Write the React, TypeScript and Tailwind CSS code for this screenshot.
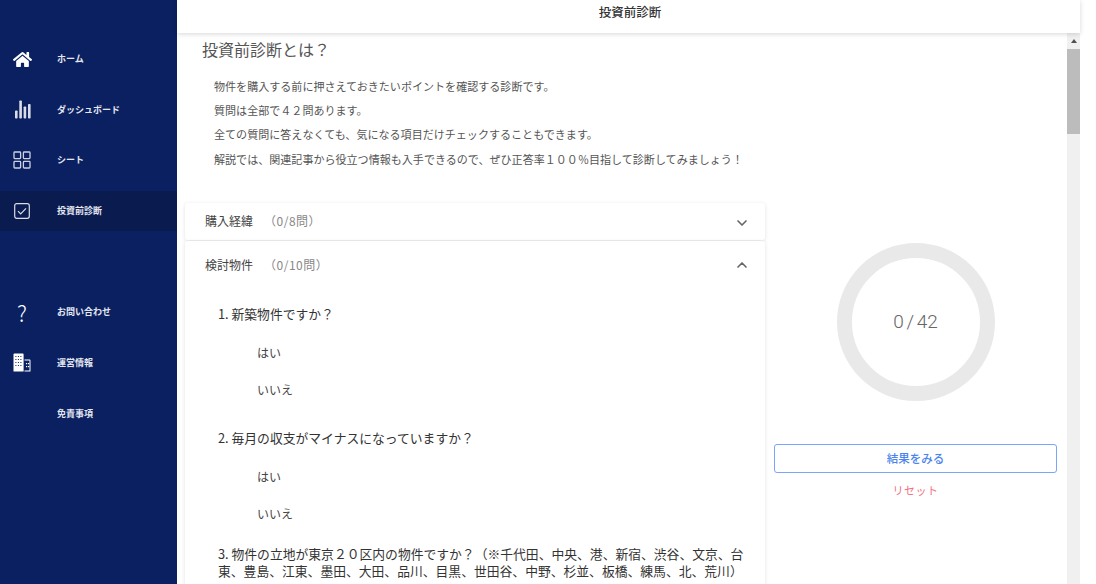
import { ChevronDown, ChevronUp } from "lucide-react";
import { FaHome } from "react-icons/fa";

const font = "font-['Noto_Sans_CJK_JP','Noto_Sans',sans-serif]";

function BarsIcon() {
  return (
    <svg width="17" height="19" viewBox="0 0 17 19" fill="currentColor" className="opacity-85">
      <rect x="1" y="10.5" width="2.6" height="8" rx="0.8" />
      <rect x="5.3" y="0.5" width="2.6" height="18" rx="0.8" />
      <rect x="9.6" y="6.5" width="2.6" height="12" rx="0.8" />
      <rect x="14" y="4" width="2.6" height="14.5" rx="0.8" />
    </svg>
  );
}

function GridIcon() {
  return (
    <svg width="18" height="18" viewBox="0 0 18 18" fill="none" stroke="currentColor" strokeWidth="1.3" className="opacity-80">
      <rect x="1" y="1" width="6.6" height="6.6" rx="0.8" />
      <rect x="10.4" y="1" width="6.6" height="6.6" rx="0.8" />
      <rect x="1" y="10.4" width="6.6" height="6.6" rx="0.8" />
      <rect x="10.4" y="10.4" width="6.6" height="6.6" rx="0.8" />
    </svg>
  );
}

function CheckIcon() {
  return (
    <svg width="16" height="16" viewBox="0 0 16 16" fill="none" stroke="currentColor" className="opacity-85">
      <rect x="0.7" y="0.7" width="14.6" height="14.6" rx="2" strokeWidth="1.2" />
      <path d="M4 8.2l2.7 2.7L12 5.4" strokeWidth="1.2" />
    </svg>
  );
}

function BuildingIcon() {
  return (
    <svg width="18" height="19" viewBox="0 0 18 19" fill="currentColor">
      <path d="M0.5 1.6C0.5 1 1 .5 1.6 .5h8c.6 0 1 .5 1 1.1v16.9H.5z" />
      <path d="M11.5 6.5h5c.6 0 1 .5 1 1v11h-6v-1h5v-10h-5z" />
      <g fill="#0a2060">
        <rect x="2.4" y="3" width="1" height="1" />
        <rect x="4.9" y="3" width="1" height="1" />
        <rect x="7.4" y="3" width="1" height="1" />
        <rect x="2.4" y="6" width="1" height="1" />
        <rect x="4.9" y="6" width="1" height="1" />
        <rect x="7.4" y="6" width="1" height="1" />
        <rect x="2.4" y="9" width="1" height="1" />
        <rect x="4.9" y="9" width="1" height="1" />
        <rect x="7.4" y="9" width="1" height="1" />
        <rect x="2.4" y="12" width="1" height="1" />
        <rect x="4.9" y="12" width="1" height="1" />
        <rect x="7.4" y="12" width="1" height="1" />
      </g>
      <rect x="13" y="10" width="1.2" height="1.2" />
      <rect x="15" y="10" width="1.2" height="1.2" />
      <rect x="13" y="13" width="1.2" height="1.2" />
      <rect x="15" y="13" width="1.2" height="1.2" />
    </svg>
  );
}

function NavItem({ icon, label, active }: { icon?: React.ReactNode; label: string; active?: boolean }) {
  return (
    <div className={`flex h-10 items-center ${active ? "bg-[#0a1b50]" : ""}`}>
      <div className="flex w-[57px] justify-center pr-[13px] text-white">{icon}</div>
      <span className="text-[9px] font-bold text-[#e4e7f0]">{label}</span>
    </div>
  );
}

function Panel({ title, count, open, children }: { title: string; count: string; open?: boolean; children?: React.ReactNode }) {
  return (
    <div className="rounded-[3px] bg-white shadow-[0_1px_4px_rgba(0,0,0,0.12)]">
      <div className={`flex items-center pl-5 pr-[15px] ${open ? "h-[49px]" : "h-[37px]"}`}>
        <span className="text-xs text-[#444]">{title}</span>
        <span className="ml-[11px] text-xs tracking-[0.5px] text-[#888]">{count}</span>
        <span className={`ml-auto text-[#666] ${open ? "" : "pt-1"}`}>
          {open ? <ChevronUp size={16} strokeWidth={2.5} /> : <ChevronDown size={16} strokeWidth={2.5} />}
        </span>
      </div>
      {children}
    </div>
  );
}

function Question({ text, answers }: { text: string; answers?: boolean }) {
  return (
    <div className="mb-[21px]">
      <div className="flex h-9 items-center pl-[33px] pr-5">
        <p className="text-[12.8px] leading-[17px] text-[#333]">{text}</p>
      </div>
      {answers && (
        <div className="mt-3 flex flex-col gap-[19px] pl-[72px] text-xs leading-[18px] text-[#444]">
          <span>はい</span>
          <span>いいえ</span>
        </div>
      )}
    </div>
  );
}

export default function App() {
  return (
    <div className={`flex h-[584px] w-[1096px] overflow-hidden bg-white ${font}`}>
      <aside className="flex w-[177px] shrink-0 flex-col bg-[#0a2060] pt-[39px]">
        <div className="flex flex-col gap-[10.5px]">
          <NavItem icon={<FaHome size={19} />} label="ホーム" />
          <NavItem icon={<BarsIcon />} label="ダッシュボード" />
          <NavItem icon={<GridIcon />} label="シート" />
          <NavItem icon={<CheckIcon />} label="投資前診断" active />
        </div>
        <div className="mt-[61px] flex flex-col gap-[11px]">
          <NavItem icon={<span className="text-[22px] font-light leading-none text-white">?</span>} label="お問い合わせ" />
          <NavItem icon={<BuildingIcon />} label="運営情報" />
          <NavItem label="免責事項" />
        </div>
      </aside>

      <div className="flex w-[903px] shrink-0 flex-col">
        <header className="relative z-10 flex h-[33px] shrink-0 items-center justify-center pb-2 pl-[3px] text-[12.5px] font-medium text-[#333] shadow-[0_1px_5px_rgba(0,0,0,0.16)]">
          投資前診断
        </header>
        <div className="flex min-h-0 flex-1">
          <main className="flex min-w-0 flex-1 overflow-hidden pl-2">
            <div className="w-[580px] shrink-0">
              <h1 className="mt-[5px] pl-[17px] text-base font-normal leading-[22px] text-[#555]">投資前診断とは？</h1>
              <div className="mt-[18px] flex flex-col gap-[8.2px] pl-[29px] text-[11.06px] leading-4 text-[#555]">
                <p>物件を購入する前に押さえておきたいポイントを確認する診断です。</p>
                <p>質問は全部で４２問あります。</p>
                <p>全ての質問に答えなくても、気になる項目だけチェックすることもできます。</p>
                <p>解説では、関連記事から役立つ情報も入手できるので、ぜひ正答率１００％目指して診断してみましょう！</p>
              </div>
              <div className="mt-[36px] flex flex-col gap-px">
                <Panel title="購入経緯" count="（0/8問）" />
                <Panel title="検討物件" count="（0/10問）" open>
                  <div className="pt-[6px]">
                    <Question text="1. 新築物件ですか？" answers />
                    <Question text="2. 毎月の収支がマイナスになっていますか？" answers />
                    <Question text="3. 物件の立地が東京２０区内の物件ですか？（※千代田、中央、港、新宿、渋谷、文京、台東、豊島、江東、墨田、大田、品川、目黒、世田谷、中野、杉並、板橋、練馬、北、荒川）" />
                  </div>
                </Panel>
              </div>
            </div>
            <div className="ml-[9px] flex w-[283px] shrink-0 flex-col items-center pt-[210px]">
              <div className="flex h-[158px] w-[158px] items-center justify-center rounded-full border-[15px] border-[#e9e9e9] pt-px font-['Roboto',sans-serif] text-[19px] font-light text-[#666] [word-spacing:-2px]">
                0 / 42
              </div>
              <button className="mt-[43px] h-[29px] w-full rounded-[3px] border border-[#7aa5f8] text-[11.5px] font-medium text-[#4a84ee]">
                結果をみる
              </button>
              <span className="mt-[9px] text-[11px] tracking-[0.5px] text-[#f0727f]">リセット</span>
            </div>
          </main>
          <div className="flex w-[13px] shrink-0 flex-col bg-[#f0f0f0]">
            <div className="flex h-4 items-center justify-center">
              <div className="h-0 w-0 border-x-[3.5px] border-b-[4px] border-x-transparent border-b-[#505050]" />
            </div>
            <div className="h-[85px] bg-[#bcbcbc]" />
          </div>
        </div>
      </div>
    </div>
  );
}
